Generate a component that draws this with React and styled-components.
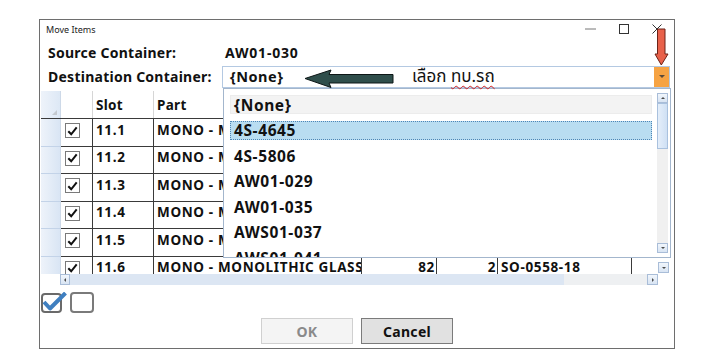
import React from "react";
import styled, { createGlobalStyle } from "styled-components";

const GlobalStyle = createGlobalStyle`
  html, body {
    margin: 0;
    padding: 0;
    background: #ffffff;
  }
  body {
    font-family: "Noto Sans", "Open Sans", "Liberation Sans", sans-serif;
    color: #111111;
  }
`;

const Page = styled.div`
  width: 727px;
  height: 360px;
  padding: 19px 0 0 39px;
  box-sizing: border-box;
`;

const Window = styled.div`
  position: relative;
  width: 636px;
  height: 330px;
  box-sizing: border-box;
  border: 1px solid #6e6e6e;
  background: #ffffff;
  display: flex;
  flex-direction: column;
`;

const TitleBar = styled.div`
  height: 21px;
  box-sizing: border-box;
  padding: 0 1px 3px 6px;
  display: flex;
  align-items: center;
  font-size: 9px;
  color: #222222;
`;

const WinControls = styled.div`
  margin-left: auto;
  display: flex;
  height: 100%;
`;

const WinButton = styled.div`
  width: 33px;
  display: flex;
  align-items: center;
  justify-content: center;
`;

const FieldRow = styled.div`
  display: grid;
  grid-template-columns: 174px 1fr;
  align-items: center;
  height: 23px;
  padding: 0 4px 0 8px;
  margin-top: ${(p) => (p.$gap ? "1px" : "0")};
`;

const Label = styled.div`
  font-weight: 700;
  font-size: 14px;
  letter-spacing: 0.25px;
  white-space: nowrap;
`;

const Value = styled(Label)`
  padding-left: 3px;
  letter-spacing: 0.8px;
`;

const Combo = styled.div`
  height: 22px;
  box-sizing: border-box;
  border: 1px solid #b4c9e2;
  display: flex;
`;

const ComboText = styled.div`
  flex: 1;
  padding: 0 0 1px 7px;
  display: flex;
  align-items: center;
  font-weight: 700;
  font-size: 14.5px;
  letter-spacing: 0.5px;
`;

const DropButton = styled.div`
  width: 15px;
  background: #f6a343;
  display: flex;
  align-items: center;
  justify-content: center;
`;

const Tri = styled.div`
  width: 0;
  height: 0;
  border-left: ${(p) => p.$s || 3}px solid transparent;
  border-right: ${(p) => p.$s || 3}px solid transparent;
  border-top: ${(p) => p.$s || 3}px solid ${(p) => p.$c || "#4b4b4b"};
  transform: rotate(${(p) => p.$rot || 0}deg);
`;

const Grid = styled.div`
  margin: 3px 5px 0 1px;
  height: 194px;
  display: flex;
`;

const GridMain = styled.div`
  flex: 1;
  display: flex;
  flex-direction: column;
  min-width: 0;
`;

const cols = "20px 32px 61px 208px 75px 61px 134px 1fr";

const HeaderRow = styled.div`
  display: grid;
  grid-template-columns: ${cols};
  height: 28px;
  box-sizing: border-box;
  border-bottom: 1px solid #3a3a3a;
`;

const Corner = styled.div`
  background: linear-gradient(90deg, #eef3fa, #dde8f5);
  border-right: 1px solid #cdd9e8;
  position: relative;
`;

const CornerMark = styled.div`
  position: absolute;
  right: 3px;
  bottom: 3px;
  width: 0;
  height: 0;
  border-left: 5px solid transparent;
  border-bottom: 5px solid #c4c9cf;
`;

const HeadCell = styled.div`
  display: flex;
  align-items: center;
  padding-left: 3px;
  font-weight: 700;
  font-size: 13.5px;
  letter-spacing: 0.3px;
  border-right: 1px solid #d6d6d6;
`;

const Body = styled.div`
  height: 155px;
  overflow: hidden;
`;

const Row = styled.div`
  display: grid;
  grid-template-columns: ${cols};
  height: 27.5px;
  box-sizing: border-box;
  border-bottom: 1px solid #3a3a3a;
`;

const RowHead = styled.div`
  background: linear-gradient(90deg, #eef3fa, #d9e5f4);
  border-right: 1px solid #cdd9e8;
  margin-bottom: -1px;
  border-bottom: 1px solid #c3d3e8;
`;

const Cell = styled.div`
  display: flex;
  align-items: center;
  justify-content: ${(p) => (p.$right ? "flex-end" : "flex-start")};
  padding: 0 1px 5px 3px;
  font-weight: 700;
  font-size: 13.5px;
  letter-spacing: 0.65px;
  white-space: nowrap;
  overflow: hidden;
  border-right: ${(p) => (p.$noLine ? "none" : "1px solid #3a3a3a")};
`;

const CheckCell = styled(Cell)`
  padding: 0 0 3px 4px;
`;

const CheckBox = styled.div`
  width: 15px;
  height: 15px;
  box-sizing: border-box;
  border: 1px solid #7a7a7a;
  background: #ffffff;
  display: flex;
  align-items: center;
  justify-content: center;
`;

const HScroll = styled.div`
  height: 11px;
  margin-left: 19px;
  display: flex;
  background: #eef0f2;
`;

const HThumb = styled.div`
  width: 494px;
  background: #dce6f3;
`;

const ScrollBtn = styled.div`
  width: ${(p) => p.$w || 11}px;
  height: ${(p) => p.$h || 11}px;
  box-sizing: border-box;
  border: 1px solid #a9bdd8;
  background: linear-gradient(#f1f6fc, #d8e4f3);
  display: flex;
  align-items: center;
  justify-content: center;
  flex-shrink: 0;
  margin-left: ${(p) => (p.$push ? "auto" : "0")};
`;

const VScroll = styled.div`
  width: 11px;
  display: flex;
  flex-direction: column;
  justify-content: flex-end;
`;

const ScrollCorner = styled.div`
  height: 12px;
  background: #ffffff;
`;

const Footer = styled.div`
  display: flex;
  flex-direction: column;
  margin-top: 7px;
`;

const SelectIcons = styled.div`
  display: flex;
  height: 21px;
  padding-left: 1px;
  gap: 3px;
`;

const Buttons = styled.div`
  display: flex;
  justify-content: center;
  gap: 8px;
  margin-top: 5px;
`;

const Button = styled.div`
  width: 92px;
  height: 26px;
  box-sizing: border-box;
  display: flex;
  align-items: center;
  justify-content: center;
  font-weight: 700;
  font-size: 14px;
  letter-spacing: 0.3px;
  background: ${(p) => (p.$disabled ? "#f4f4f4" : "#e1e1e1")};
  border: 1px solid ${(p) => (p.$disabled ? "#d0d0d0" : "#7b7b7b")};
  color: ${(p) => (p.$disabled ? "#8a8a8a" : "#111111")};
`;

const Popup = styled.div`
  position: absolute;
  left: 183px;
  top: 68px;
  width: 448px;
  height: 170px;
  box-sizing: border-box;
  border: 1px solid #a3b6cd;
  background: #ffffff;
  display: flex;
`;

const List = styled.div`
  flex: 1;
  padding: 6px 5px 0 6px;
  overflow: hidden;
`;

const Item = styled.div`
  height: 19px;
  margin-bottom: 6.5px;
  box-sizing: border-box;
  padding-left: 3px;
  display: flex;
  align-items: center;
  font-weight: 700;
  font-size: 15.5px;
  letter-spacing: 0.6px;
  background: ${(p) => (p.$selected ? "#b9ddf1" : p.$none ? "#f3f3f3" : "transparent")};
  border: 1px ${(p) => (p.$selected ? "dotted #4f86b5" : p.$none ? "solid #ececec" : "solid transparent")};
`;

const PopScroll = styled.div`
  width: 11px;
  margin: 4px 2px 4px 0;
  display: flex;
  flex-direction: column;
  background: #f0f0f0;
`;

const PopThumb = styled.div`
  height: 46px;
  box-sizing: border-box;
  border: 1px solid #a9c1de;
  background: linear-gradient(90deg, #e4eefa, #cfe0f4);
  margin-bottom: auto;
`;

const Callout = styled.div`
  position: absolute;
  left: ${(p) => p.$x}px;
  top: ${(p) => p.$y}px;
  line-height: 1;
`;

const ThaiNote = styled(Callout)`
  font-size: 17px;
  font-family: "Noto Sans Thai", "Noto Sans", "DejaVu Sans", sans-serif;
  color: #111111;
`;

const Squiggle = styled.span`
  text-decoration: underline wavy #d42020;
  text-decoration-thickness: 1px;
  text-underline-offset: 3px;
`;

const Check = () => (
  <svg width="11" height="10" viewBox="0 0 11 10">
    <path d="M1.3 5.2 L4.2 8.3 L9.7 1.3" fill="none" stroke="#111" strokeWidth="2" />
  </svg>
);

const rows = ["11.1", "11.2", "11.3", "11.4", "11.5", "11.6"];
const options = ["4S-4645", "4S-5806", "AW01-029", "AW01-035", "AWS01-037", "AWS01-041"];

export default function App() {
  return (
    <Page>
      <GlobalStyle />
      <Window>
        <TitleBar>
          Move Items
          <WinControls>
            <WinButton>
              <svg width="11" height="2"><line x1="0" y1="1" x2="11" y2="1" stroke="#777" /></svg>
            </WinButton>
            <WinButton>
              <svg width="10" height="10"><rect x="0.5" y="0.5" width="9" height="9" fill="none" stroke="#333" /></svg>
            </WinButton>
            <WinButton>
              <svg width="10" height="10">
                <path d="M0.5 0.5 L9.5 9.5 M9.5 0.5 L0.5 9.5" stroke="#333" />
              </svg>
            </WinButton>
          </WinControls>
        </TitleBar>

        <FieldRow>
          <Label>Source Container:</Label>
          <Value>AW01-030</Value>
        </FieldRow>
        <FieldRow $gap>
          <Label>Destination Container:</Label>
          <Combo>
            <ComboText>{"{None}"}</ComboText>
            <DropButton>
              <Tri $s={3} $c="#5a4a3a" />
            </DropButton>
          </Combo>
        </FieldRow>

        <Grid>
          <GridMain>
            <HeaderRow>
              <Corner>
                <CornerMark />
              </Corner>
              <HeadCell />
              <HeadCell>Slot</HeadCell>
              <HeadCell>Part</HeadCell>
              <HeadCell />
              <HeadCell />
              <HeadCell />
              <HeadCell />
            </HeaderRow>
            <Body>
              {rows.map((slot) => (
                <Row key={slot}>
                  <RowHead />
                  <CheckCell>
                    <CheckBox>
                      <Check />
                    </CheckBox>
                  </CheckCell>
                  <Cell>{slot}</Cell>
                  <Cell>MONO - MONOLITHIC GLASS</Cell>
                  <Cell $right>82</Cell>
                  <Cell $right>2</Cell>
                  <Cell>SO-0558-18</Cell>
                  <Cell $noLine />
                </Row>
              ))}
            </Body>
            <HScroll>
              <ScrollBtn $w={10}>
                <Tri $s={2.5} $rot={90} />
              </ScrollBtn>
              <HThumb />
              <ScrollBtn $push $w={11}>
                <Tri $s={2.5} $rot={-90} />
              </ScrollBtn>
            </HScroll>
          </GridMain>
          <VScroll>
            <ScrollBtn>
              <Tri $s={2.5} />
            </ScrollBtn>
            <ScrollCorner />
          </VScroll>
        </Grid>

        <Footer>
          <SelectIcons>
            <svg width="26" height="21" viewBox="0 0 26 21">
              <rect x="1" y="2" width="19" height="18" rx="3" fill="none" stroke="#6a6a6a" strokeWidth="2" />
              <path d="M3 10 L9 16.5 L24.5 1" fill="none" stroke="#3f7fc0" strokeWidth="4" strokeLinejoin="round" />
            </svg>
            <svg width="24" height="21" viewBox="0 0 24 21">
              <rect x="1" y="1" width="22" height="19" rx="3" fill="none" stroke="#7a7a7a" strokeWidth="2" />
            </svg>
          </SelectIcons>
          <Buttons>
            <Button $disabled>OK</Button>
            <Button>Cancel</Button>
          </Buttons>
        </Footer>

        <Popup>
          <List>
            <Item $none>{"{None}"}</Item>
            {options.map((o, i) => (
              <Item key={o} $selected={i === 0}>
                {o}
              </Item>
            ))}
          </List>
          <PopScroll>
            <ScrollBtn $h={10}>
              <Tri $s={2.5} $rot={180} />
            </ScrollBtn>
            <PopThumb />
            <ScrollBtn $h={10}>
              <Tri $s={2.5} />
            </ScrollBtn>
          </PopScroll>
        </Popup>

        <Callout $x={264} $y={49}>
          <svg width="92" height="20" viewBox="0 0 92 20">
            <polygon
              points="1,9.5 27,1 25,5.5 89,5.5 89,14 25,14 27,18.5"
              fill="#2f4e4b"
              stroke="#0d1616"
              strokeWidth="1"
              strokeLinejoin="round"
            />
          </svg>
        </Callout>
        <ThaiNote $x={372} $y={49}>
          เลือก <Squiggle>ทบ.รถ</Squiggle>
        </ThaiNote>
        <Callout $x={614} $y={8}>
          <svg width="15" height="38" viewBox="0 0 15 38">
            <polygon
              points="3.5,1 11,1 11,26 14,26 7.3,37 1,26 3.5,26"
              fill="#e8614a"
              stroke="#6b2318"
              strokeWidth="1"
              strokeLinejoin="round"
            />
          </svg>
        </Callout>
      </Window>
    </Page>
  );
}
